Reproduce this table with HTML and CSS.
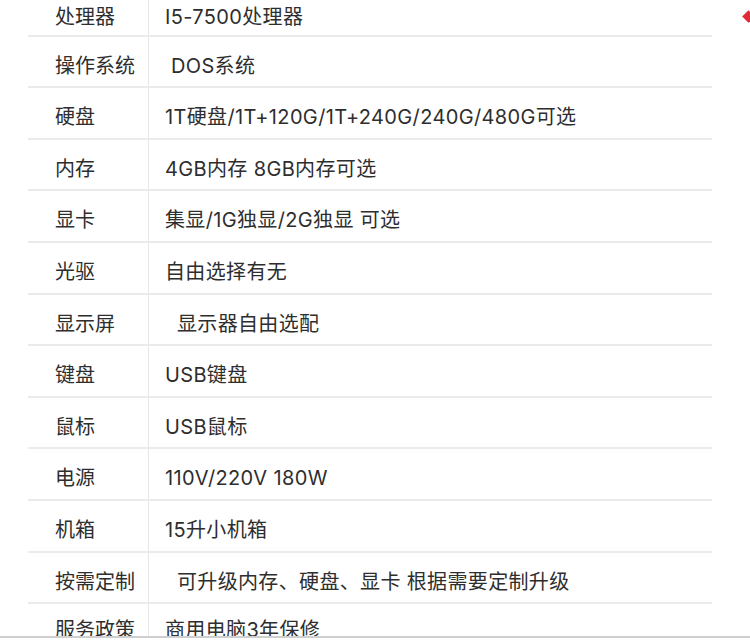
FILE: index.html
```html
<!DOCTYPE html>
<html lang="zh-CN">
<head>
<meta charset="utf-8">
<link rel="stylesheet" href="styles.css">
</head>
<body>
<div class="page">
  <div class="marker"></div>
  <div class="specs">
    <div class="row first"><div class="k">处理器</div><div class="v">I5-7500处理器</div></div>
    <div class="row"><div class="k">操作系统</div><div class="v">&nbsp;DOS系统</div></div>
    <div class="row"><div class="k">硬盘</div><div class="v">1T硬盘/1T+120G/1T+240G/240G/480G可选</div></div>
    <div class="row"><div class="k">内存</div><div class="v">4GB内存 8GB内存可选</div></div>
    <div class="row"><div class="k">显卡</div><div class="v">集显/1G独显/2G独显 可选</div></div>
    <div class="row"><div class="k">光驱</div><div class="v">自由选择有无</div></div>
    <div class="row"><div class="k">显示屏</div><div class="v">&nbsp;&nbsp;显示器自由选配</div></div>
    <div class="row"><div class="k">键盘</div><div class="v">USB键盘</div></div>
    <div class="row"><div class="k">鼠标</div><div class="v">USB鼠标</div></div>
    <div class="row"><div class="k">电源</div><div class="v">110V/220V 180W</div></div>
    <div class="row"><div class="k">机箱</div><div class="v">15升小机箱</div></div>
    <div class="row"><div class="k">按需定制</div><div class="v">&nbsp;&nbsp;可升级内存、硬盘、显卡 根据需要定制升级</div></div>
    <div class="row last"><div class="k">服务政策</div><div class="v">商用电脑3年保修</div></div>
  </div>
</div>
</body>
</html>
```
FILE: styles.css
```css
html, body {
  margin: 0;
  padding: 0;
  background: #fff;
}
.page {
  position: relative;
  width: 750px;
  height: 636px;
  overflow: hidden;
  border-bottom: 2px solid #cfcfcf;
  font-family: Inter, "Noto Sans CJK SC", sans-serif;
  font-size: 20px;
  color: #2e2e2e;
}
.marker {
  position: absolute;
  left: 744px;
  top: 12px;
  width: 9px;
  height: 9px;
  background: #e02a36;
  transform: rotate(45deg);
}
.specs {
  margin: -15px 38px 0 28px;
}
.row {
  display: flex;
  height: 49.6px;
  border-bottom: 2px solid #ebebeb;
}
.k {
  width: 121px;
  flex: none;
  padding: 17px 0 0 27px;
  box-sizing: border-box;
  border-right: 1px solid #e6e6e6;
  line-height: 24px;
  white-space: nowrap;
}
.v {
  flex: 1;
  padding: 17px 0 0 16px;
  line-height: 24px;
  letter-spacing: 0.35px;
  white-space: pre;
}
.first .k,
.first .v {
  padding-top: 20px;
}
.last .k,
.last .v {
  padding-top: 14px;
}
```
